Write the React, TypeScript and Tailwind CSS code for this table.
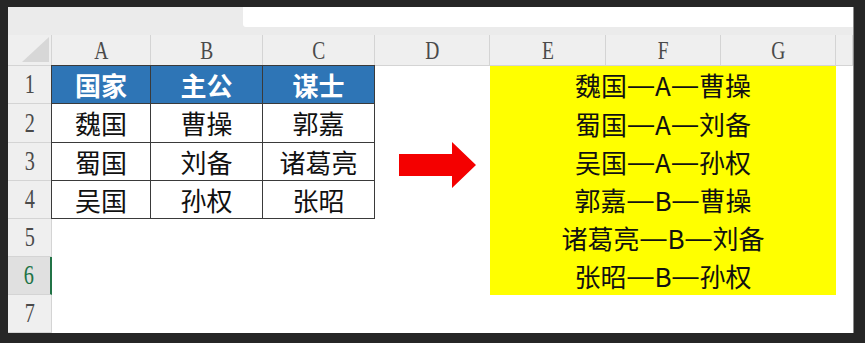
import React from 'react';

const cols = ['A', 'B', 'C', 'D', 'E', 'F', 'G', ''];
const rows = [1, 2, 3, 4, 5, 6, 7];

const table = [
  ['魏国', '曹操', '郭嘉'],
  ['蜀国', '刘备', '诸葛亮'],
  ['吴国', '孙权', '张昭'],
];

const results = [
  '魏国—A—曹操',
  '蜀国—A—刘备',
  '吴国—A—孙权',
  '郭嘉—B—曹操',
  '诸葛亮—B—刘备',
  '张昭—B—孙权',
];

const cjk = { fontFamily: '"Noto Sans CJK SC", "Noto Sans", sans-serif' };
const serif = { fontFamily: '"Liberation Serif", "DejaVu Serif", serif' };
const dashFont = { fontFamily: '"Liberation Sans", Arial, sans-serif' };

function Arrow() {
  return (
    <svg width="77" height="46" viewBox="0 0 77 46" className="shrink-0 translate-y-[3px]">
      <path d="M0 12 H53 V0 L77 23 L53 46 V34 H0 Z" fill="#f40000" />
    </svg>
  );
}

// em dashes in a Latin face so they run edge to edge
function ResultText({ text }: { text: string }) {
  const parts = text.split('—');
  return (
    <>
      {parts.map((p, i) => (
        <React.Fragment key={i}>
          {i > 0 && <span className="px-[1px]" style={dashFont}>—</span>}
          {p}
        </React.Fragment>
      ))}
    </>
  );
}

export default function App() {
  return (
    <div className="w-[865px] h-[343px] bg-[#262626] pl-[8px] pt-[7px] overflow-hidden">
      <div className="w-[846px] h-[326px] bg-white border-r border-[#8a8a8a] flex flex-col overflow-hidden">
        {/* top strip */}
        <div className="h-[28px] bg-[#ebebeb] flex shrink-0">
          <div className="w-[235px]" />
          <div className="flex-1 h-[20px] bg-white rounded-bl-[3px]" />
        </div>

        {/* sheet grid */}
        <div className="grid grid-cols-[44px_99px_112px_112px_115px_116px_115px_115px_1fr] grid-rows-[31px_38px_39px_38px_38px_38px_38px_38px]">
          {/* corner */}
          <div className="bg-[#efefef] border-b border-r border-[#d4d4d4] flex items-end justify-end pr-[2px] pb-[3px]">
            <svg width="27" height="25" viewBox="0 0 27 25">
              <path d="M27 0 V25 H0 Z" fill="#d7d7d7" />
            </svg>
          </div>
          {cols.map((c, i) => (
            <div
              key={i}
              className="bg-[#efefef] border-b border-r border-[#d4d4d4] flex items-center justify-center text-[#4a4a4a] text-[26px] leading-none pt-[2px]"
              style={serif}
            >
              <span className="scale-x-75 inline-block">{c}</span>
            </div>
          ))}

          {/* row headers */}
          {rows.map(r => (
            <div
              key={r}
              className={
                r === 6
                  ? 'col-start-1 bg-[#e0e0e0] border-b border-r-2 border-b-[#d4d4d4] border-r-[#217346] flex items-center justify-center text-[#217346] text-[27px] leading-none'
                  : 'col-start-1 bg-[#efefef] border-b border-r border-[#d4d4d4] flex items-center justify-center text-[#4a4a4a] text-[27px] leading-none'
              }
              style={{ ...serif, gridRowStart: r + 1 }}
            >
              <span className="scale-x-75 inline-block">{r}</span>
            </div>
          ))}

          {/* source table */}
          <div className="col-start-2 col-span-3 row-start-2 row-span-4 grid grid-cols-[99px_112px_112px] grid-rows-[38px_39px_38px_38px] border-l border-t border-[#3a3a3a] -ml-px -mt-px" style={cjk}>
            {['国家', '主公', '谋士'].map(h => (
              <div key={h} className="bg-[#2e75b6] text-white font-bold text-[26px] flex items-center justify-center border-r border-b border-[#3a3a3a] leading-none">
                {h}
              </div>
            ))}
            {table.flat().map((t, i) => (
              <div key={i} className="text-[#111] text-[26px] flex items-center justify-center border-r border-b border-[#3a3a3a] leading-none">
                {t}
              </div>
            ))}
          </div>

          {/* arrow */}
          <div className="col-start-5 row-start-4 flex items-center pl-[24px]">
            <Arrow />
          </div>

          {/* result block */}
          <div className="col-start-6 col-span-3 row-start-2 row-span-6 bg-[#ffff00] flex flex-col" style={cjk}>
            {results.map((t, i) => (
              <div key={i} className={i === 1 ? 'h-[39px] flex items-center justify-center text-[26px] text-[#111] leading-none' : 'h-[38px] flex items-center justify-center text-[26px] text-[#111] leading-none'}>
                <ResultText text={t} />
              </div>
            ))}
          </div>
        </div>
      </div>
    </div>
  );
}
